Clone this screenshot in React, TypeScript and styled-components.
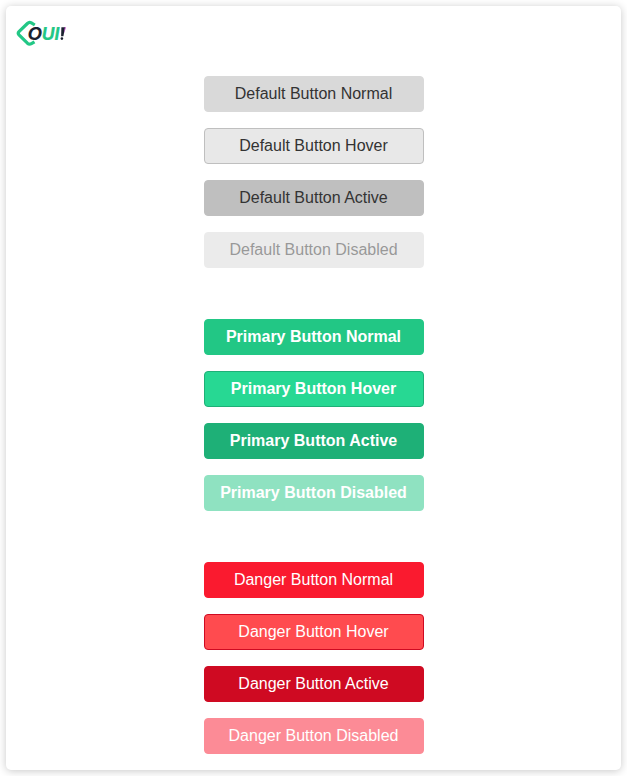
import React from "react";
import styled, { createGlobalStyle, css } from "styled-components";

type Kind = "default" | "primary" | "danger";
type State = "Normal" | "Hover" | "Active" | "Disabled";

const palette = {
  default: { text: "#333333", weight: 400, normal: "#d9d9d9", hover: "#e8e8e8", active: "#bfbfbf" },
  primary: { text: "#ffffff", weight: 700, normal: "#22c785", hover: "#27d893", active: "#1eb077" },
  danger: { text: "#ffffff", weight: 400, normal: "#fa1a2f", hover: "#ff4b4f", active: "#cf0a22" },
};

const GlobalStyle = createGlobalStyle`
  body {
    margin: 0;
    background: #ffffff;
    font-family: "Liberation Sans", Arial, sans-serif;
  }
`;

const Card = styled.main`
  box-sizing: border-box;
  width: 615px;
  height: 764px;
  margin: 6px;
  padding: 14px 10px 16px;
  border-radius: 5px;
  background: #ffffff;
  box-shadow: 0 1px 8px rgba(0, 0, 0, 0.22);
`;

const Logo = styled.svg`
  display: block;
  width: 52px;
  height: 28px;
  overflow: visible;
`;

const Wordmark = styled.text`
  font-family: Inter, sans-serif;
  font-weight: 700;
  font-style: italic;
  font-size: 17.4px;
`;

const Groups = styled.div`
  display: flex;
  flex-direction: column;
  align-items: center;
  gap: 51px;
  padding-top: 28px;
`;

const Group = styled.section`
  display: flex;
  flex-direction: column;
  gap: 16px;
`;

const Button = styled.button<{ $kind: Kind; $state: State }>`
  box-sizing: border-box;
  width: 220px;
  height: 36px;
  padding: 0;
  border: 1px solid transparent;
  border-radius: 4px;
  font-family: inherit;
  font-size: 16px;
  line-height: 18px;
  ${({ $kind, $state }) => {
    const tone = palette[$kind];
    const fill = $state === "Hover" ? tone.hover : $state === "Active" ? tone.active : tone.normal;
    return css`
      color: ${tone.text};
      font-weight: ${tone.weight};
      background: ${fill};
      border-color: ${$state === "Hover" ? tone.active : fill};
      opacity: ${$state === "Disabled" ? 0.5 : 1};
    `;
  }}
`;

const kinds: { kind: Kind; label: string }[] = [
  { kind: "default", label: "Default" },
  { kind: "primary", label: "Primary" },
  { kind: "danger", label: "Danger" },
];
const states: State[] = ["Normal", "Hover", "Active", "Disabled"];

export default function App() {
  return (
    <>
      <GlobalStyle />
      <Card>
        <Logo viewBox="16 20 52 28" role="img" aria-label="OUI!">
          <path
            d="M34.8 25 L31.4 22.9 Q29.3 21.7 27.4 23.5 L19 31.6 Q17.5 33.2 19 34.9 L27.4 43.2 Q29.3 44.9 31.4 43.7 L34.5 41.9"
            fill="none"
            stroke="#22c785"
            strokeWidth="3.2"
          />
          <Wordmark x="27.4" y="39.9" fill="#1b2130" textLength="14.6" lengthAdjust="spacingAndGlyphs">O</Wordmark>
          <Wordmark x="41.7" y="39.9" fill="#22c785" stroke="#22c785" strokeWidth="0.2" textLength="12.8" lengthAdjust="spacingAndGlyphs">U</Wordmark>
          <Wordmark x="54.6" y="39.9" fill="#22c785" stroke="#22c785" strokeWidth="0.2">I</Wordmark>
          <path d="M61.4 27.2 H65.1 L63.4 36.2 H61.1 Z" fill="#1b2130" />
          <path d="M64.7 27.2 H65.8 L64.4 33.2 Z" fill="#b51fc0" />
          <circle cx="61.9" cy="38.6" r="1.3" fill="#1b2130" />
        </Logo>
        <Groups>
          {kinds.map(({ kind, label }) => (
            <Group key={kind}>
              {states.map((state) => (
                <Button key={state} $kind={kind} $state={state} disabled={state === "Disabled"}>
                  {label} Button {state}
                </Button>
              ))}
            </Group>
          ))}
        </Groups>
      </Card>
    </>
  );
}
